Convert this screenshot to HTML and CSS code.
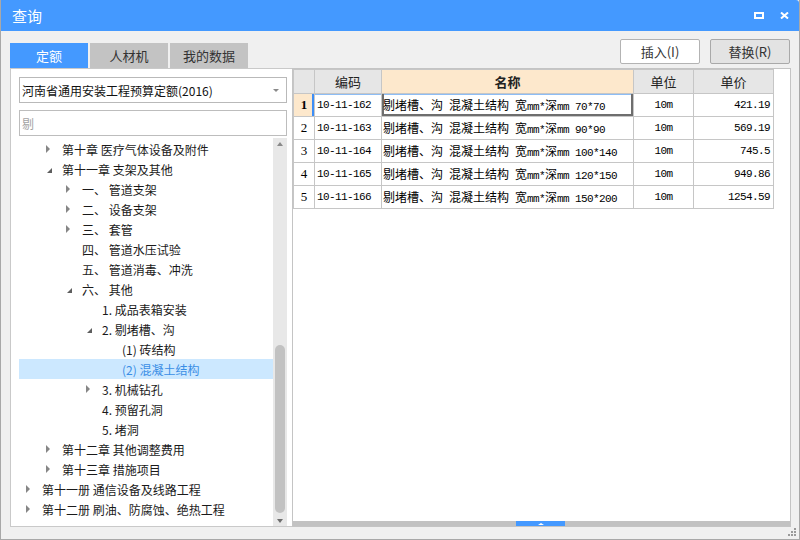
FILE: index.html
```html
<!DOCTYPE html>
<html lang="zh-CN">
<head>
<meta charset="utf-8">
<title>查询</title>
<link rel="stylesheet" href="styles.css">
</head>
<body>
<div class="win">
  <div class="titlebar">
    <span class="title">查询</span>
    <div class="winbtns">
      <svg class="ic" width="10" height="7" viewBox="0 0 10 7"><path d="M0 0H10V7H0Z M2 2V5H8V2Z" fill="#fff" fill-rule="evenodd"/></svg>
      <svg class="ic" width="9" height="7" viewBox="0 0 9 7"><path d="M1 0.5L8 6.5M8 0.5L1 6.5" stroke="#fff" stroke-width="2" fill="none"/></svg>
    </div>
  </div>

  <div class="toolbar">
    <div class="tabs">
      <div class="tab active">定额</div>
      <div class="tab">人材机</div>
      <div class="tab">我的数据</div>
    </div>
    <div class="actions">
      <button class="btn">插入(I)</button>
      <button class="btn alt">替换(R)</button>
    </div>
  </div>

  <div class="content">
    <div class="left">
      <div class="select"><span>河南省通用安装工程预算定额(2016)</span><i class="caret"></i></div>
      <div class="search">剔</div>
      <div class="treewrap">
        <div class="tree">
          <div class="row l1"><span class="tw"><i class="col"></i></span><span>第十章 医疗气体设备及附件</span></div>
          <div class="row l1"><span class="tw"><i class="exp"></i></span><span>第十一章 支架及其他</span></div>
          <div class="row l2"><span class="tw"><i class="col"></i></span><span>一、 管道支架</span></div>
          <div class="row l2"><span class="tw"><i class="col"></i></span><span>二、 设备支架</span></div>
          <div class="row l2"><span class="tw"><i class="col"></i></span><span>三、 套管</span></div>
          <div class="row l2"><span class="tw"></span><span>四、 管道水压试验</span></div>
          <div class="row l2"><span class="tw"></span><span>五、 管道消毒、冲洗</span></div>
          <div class="row l2"><span class="tw"><i class="exp"></i></span><span>六、 其他</span></div>
          <div class="row l3"><span class="tw"></span><span>1. 成品表箱安装</span></div>
          <div class="row l3"><span class="tw"><i class="exp"></i></span><span>2. 剔堵槽、沟</span></div>
          <div class="row l4"><span class="tw"></span><span>(1) 砖结构</span></div>
          <div class="row l4 sel"><span class="tw"></span><span>(2) 混凝土结构</span></div>
          <div class="row l3"><span class="tw"><i class="col"></i></span><span>3. 机械钻孔</span></div>
          <div class="row l3"><span class="tw"></span><span>4. 预留孔洞</span></div>
          <div class="row l3"><span class="tw"></span><span>5. 堵洞</span></div>
          <div class="row l1"><span class="tw"><i class="col"></i></span><span>第十二章 其他调整费用</span></div>
          <div class="row l1"><span class="tw"><i class="col"></i></span><span>第十三章 措施项目</span></div>
          <div class="row l0"><span class="tw"><i class="col"></i></span><span>第十一册 通信设备及线路工程</span></div>
          <div class="row l0"><span class="tw"><i class="col"></i></span><span>第十二册 刷油、防腐蚀、绝热工程</span></div>
        </div>
        <div class="vscroll">
          <i class="vs-up"></i>
          <div class="vs-thumb"></div>
          <i class="vs-down"></i>
        </div>
      </div>
    </div>

    <div class="right">
      <div class="grid">
        <div class="c h"></div>
        <div class="c h">编码</div>
        <div class="c h hn">名称</div>
        <div class="c h">单位</div>
        <div class="c h">单价</div>

        <div class="c num cur">1</div>
        <div class="c code r1">10-11-162</div>
        <div class="c nm focus">剔堵槽、沟<span class="m"> </span>混凝土结构<span class="m"> </span>宽<span class="m">mm*</span>深<span class="m">mm 70*70</span></div>
        <div class="c unit">10m</div>
        <div class="c price">421.19</div>

        <div class="c num">2</div>
        <div class="c code">10-11-163</div>
        <div class="c nm">剔堵槽、沟<span class="m"> </span>混凝土结构<span class="m"> </span>宽<span class="m">mm*</span>深<span class="m">mm 90*90</span></div>
        <div class="c unit">10m</div>
        <div class="c price">569.19</div>

        <div class="c num">3</div>
        <div class="c code">10-11-164</div>
        <div class="c nm">剔堵槽、沟<span class="m"> </span>混凝土结构<span class="m"> </span>宽<span class="m">mm*</span>深<span class="m">mm 100*140</span></div>
        <div class="c unit">10m</div>
        <div class="c price">745.5</div>

        <div class="c num">4</div>
        <div class="c code">10-11-165</div>
        <div class="c nm">剔堵槽、沟<span class="m"> </span>混凝土结构<span class="m"> </span>宽<span class="m">mm*</span>深<span class="m">mm 120*150</span></div>
        <div class="c unit">10m</div>
        <div class="c price">949.86</div>

        <div class="c num">5</div>
        <div class="c code">10-11-166</div>
        <div class="c nm">剔堵槽、沟<span class="m"> </span>混凝土结构<span class="m"> </span>宽<span class="m">mm*</span>深<span class="m">mm 150*200</span></div>
        <div class="c unit">10m</div>
        <div class="c price">1254.59</div>
      </div>
      <div class="spacer"></div>
      <div class="hscroll"><div class="hthumb"><i class="hs-up"></i></div></div>
    </div>
  </div>

  <div class="footer">
    <svg width="9" height="9" viewBox="0 0 9 9" fill="#9a9a9a">
      <rect x="6" y="0" width="2" height="2"/>
      <rect x="3" y="3" width="2" height="2"/><rect x="6" y="3" width="2" height="2"/>
      <rect x="0" y="6" width="2" height="2"/><rect x="3" y="6" width="2" height="2"/><rect x="6" y="6" width="2" height="2"/>
    </svg>
  </div>
</div>
</body>
</html>
```

FILE: styles.css
```css
html, body {
  margin: 0;
  padding: 0;
  background: #ffffff;
  font-family: "Noto Sans CJK SC", "Liberation Sans", sans-serif;
}

.win {
  width: 800px;
  height: 540px;
  box-sizing: border-box;
  border: 1px solid #a8a8a8;
  border-top: none;
  background: #f0f0f0;
  display: flex;
  flex-direction: column;
}

/* title bar */
.titlebar {
  flex: none;
  height: 31px;
  background: #4499ff;
  color: #fff;
  display: flex;
  align-items: center;
  justify-content: space-between;
  padding: 0 10px 0 11px;
  border-top-right-radius: 3px;
}
.title {
  font-size: 15px;
  line-height: 1;
}
.winbtns {
  display: flex;
  align-items: center;
  gap: 16px;
}
.ic { display: block; }

/* toolbar */
.toolbar {
  flex: none;
  height: 37px;
  display: flex;
  justify-content: space-between;
  padding: 0 9px;
}
.tabs {
  display: flex;
  gap: 2px;
  align-self: flex-end;
}
.tab {
  width: 78px;
  height: 25px;
  background: #c3c3c3;
  color: #333;
  font-size: 13px;
  display: flex;
  align-items: center;
  justify-content: center;
}
.tab.active {
  background: #4499ff;
  color: #fff;
}
.actions {
  display: flex;
  gap: 10px;
  margin-top: 8px;
  align-self: flex-start;
}
.btn {
  width: 80px;
  height: 25px;
  padding: 0;
  border: 1px solid #b3b3b3;
  border-radius: 2px;
  background: #fff;
  color: #333;
  font-family: "Noto Sans CJK SC", "Liberation Sans", sans-serif;
  font-size: 13px;
}
.btn.alt {
  background: #e3e3e3;
  border-color: #a9a9a9;
}

/* content */
.content {
  flex: none;
  height: 459px;
  margin: 0 8px 0 9px;
  display: flex;
}
.left {
  width: 282px;
  box-sizing: border-box;
  background: #fff;
  border: 1px solid #c9c9c9;
  border-right: none;
  padding: 8px 5px 0 8px;
  display: flex;
  flex-direction: column;
}
.select {
  flex: none;
  height: 26px;
  box-sizing: border-box;
  border: 1px solid #b9b9b9;
  display: flex;
  align-items: center;
  justify-content: space-between;
  padding: 0 7px 0 2px;
  font-size: 12px;
  color: #111;
}
.caret {
  width: 0;
  height: 0;
  border-left: 3px solid transparent;
  border-right: 3px solid transparent;
  border-top: 3px solid #8a8a8a;
}
.search {
  flex: none;
  margin-top: 7px;
  height: 26px;
  box-sizing: border-box;
  border: 1px solid #bdbdbd;
  padding-left: 2px;
  display: flex;
  align-items: center;
  font-size: 12px;
  color: #a3a3a3;
}
.treewrap {
  flex: 1;
  min-height: 0;
  margin-top: 2px;
  display: flex;
}
.tree {
  flex: 1;
  padding-top: 1px;
  overflow: hidden;
}
.row {
  height: 20px;
  display: flex;
  align-items: center;
  font-size: 12px;
  color: #1a1a1a;
  white-space: nowrap;
}
.row.l0 { padding-left: 3px; }
.row.l1 { padding-left: 23px; }
.row.l2 { padding-left: 43px; }
.row.l3 { padding-left: 63px; }
.row.l4 { padding-left: 83px; }
.row.sel {
  background: #cce8ff;
  color: #3a8ee6;
}
.tw {
  flex: none;
  width: 20px;
  height: 20px;
  display: flex;
  align-items: center;
}
.col {
  width: 0;
  height: 0;
  margin-left: 4px;
  border-left: 4px solid #868686;
  border-top: 4px solid transparent;
  border-bottom: 4px solid transparent;
}
.exp {
  width: 0;
  height: 0;
  margin-left: 5px;
  margin-top: 2px;
  border-left: 5px solid transparent;
  border-bottom: 5px solid #5e5e5e;
}
.vscroll {
  flex: none;
  width: 14px;
  background: #e8e8e8;
  display: flex;
  flex-direction: column;
  align-items: center;
}
.vs-up {
  margin-top: 4px;
  width: 0;
  height: 0;
  border-left: 3.5px solid transparent;
  border-right: 3.5px solid transparent;
  border-bottom: 4px solid #8a8a8a;
}
.vs-thumb {
  margin-top: auto;
  width: 10px;
  height: 168px;
  border-radius: 5px;
  background: #c2c2c2;
}
.vs-down {
  margin: 6px 0 3px;
  width: 0;
  height: 0;
  border-left: 3.5px solid transparent;
  border-right: 3.5px solid transparent;
  border-top: 4px solid #6e6e6e;
}

/* right panel */
.right {
  width: 499px;
  box-sizing: border-box;
  border: 1px solid #c4c4c4;
  background: #fff;
  display: flex;
  flex-direction: column;
}
.grid {
  align-self: flex-start;
  display: grid;
  grid-template-columns: 21px 67px 252px 60px 80px;
  grid-template-rows: 24px repeat(5, 23px);
  border-left: 1px solid #c6c6c6;
  border-top: 1px solid #c6c6c6;
}
.c {
  box-sizing: border-box;
  border-right: 1px solid #c6c6c6;
  border-bottom: 1px solid #c6c6c6;
  display: flex;
  align-items: center;
  overflow: hidden;
  white-space: nowrap;
  font-size: 12px;
  color: #000;
}
.h {
  background: #e6e6e6;
  justify-content: center;
  font-size: 13px;
  color: #222;
}
.h.hn {
  background: #fde8cc;
  font-weight: bold;
}
.num {
  justify-content: center;
  font-family: "Liberation Serif", serif;
  font-size: 13px;
}
.num.cur {
  background: #fde8cc;
  font-weight: bold;
  box-shadow: inset -2px 0 #3d8ef7;
}
.code, .unit, .price, .m {
  font-family: "Liberation Mono", monospace;
  font-size: 11px;
  letter-spacing: -0.6px;
}
.m { white-space: pre; }
.code { padding-left: 2px; }
.code.r1 { box-shadow: inset 0 1px #8dbdf5; }
.nm {
  display: block;
  padding-left: 1px;
  line-height: 22px;
}
.nm.focus {
  box-shadow: inset 2px 0 #6e6e6e, inset -2px 0 #6e6e6e, inset 0 -2px #6e6e6e, inset 0 1px #8dbdf5;
}
.unit { justify-content: center; }
.price {
  justify-content: flex-end;
  padding-right: 3px;
}
.spacer { flex: 1; }
.hscroll {
  flex: none;
  height: 5px;
  background: #c2c2c2;
  display: flex;
}
.hthumb {
  margin-left: 223px;
  width: 49px;
  height: 5px;
  background: #4499ff;
  display: flex;
  align-items: center;
  justify-content: center;
}
.hs-up {
  width: 0;
  height: 0;
  border-left: 3px solid transparent;
  border-right: 3px solid transparent;
  border-bottom: 2px solid #fff;
}

/* footer with grip */
.footer {
  flex: 1;
  display: flex;
  justify-content: flex-end;
  align-items: flex-start;
  padding: 1px 2px 0 0;
}
```
